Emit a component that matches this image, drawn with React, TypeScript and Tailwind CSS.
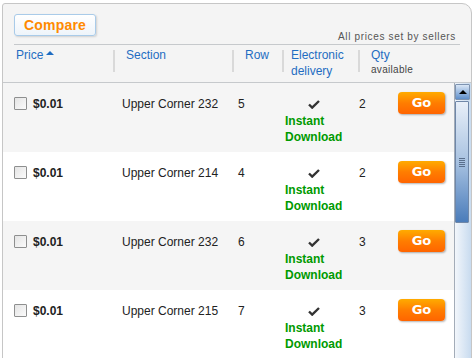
import React from "react";

type Listing = {
  section: string;
  row: string;
  qty: string;
};

const listings: Listing[] = [
  { section: "Upper Corner 232", row: "5", qty: "2" },
  { section: "Upper Corner 214", row: "4", qty: "2" },
  { section: "Upper Corner 232", row: "6", qty: "3" },
  { section: "Upper Corner 215", row: "7", qty: "3" },
];

const Sep: React.FC = () => <div className="mt-[5px] h-[22px] w-[2px] shrink-0 bg-[#d9d9d9]" />;

const CheckMark: React.FC = () => (
  <svg width="12" height="9" viewBox="0 0 12 9" className="block">
    <path d="M1 4.5 L4.2 7.6 L11 1" fill="none" stroke="#333" strokeWidth="2.4" />
  </svg>
);

const GoButton: React.FC = () => (
  <button className="mt-[9px] flex h-[22px] w-[47px] items-center justify-center rounded-[4px] bg-gradient-to-b from-[#ffab00] via-[#ff7d00] to-[#ff6400] font-['DejaVu_Sans',sans-serif] text-[13px] font-bold text-white shadow-[1px_1px_2px_rgba(0,0,0,0.3)]">
    Go
  </button>
);

const ListingRow: React.FC<{ item: Listing; shaded: boolean }> = ({ item, shaded }) => (
  <div className={`flex h-[69px] items-start pl-[11px] text-[12px] leading-4 text-[#222] ${shaded ? "bg-[#f5f5f5]" : "bg-white"}`}>
    <div className="flex w-[108px] items-start">
      <div className="mt-[14px] h-[13px] w-[13px] rounded-[1px] border border-[#8e8f8f] bg-gradient-to-br from-[#e4e4e4] to-[#fbfbfb]" />
      <span className="ml-[6px] mt-[13px] font-bold">$0.01</span>
    </div>
    <div className="w-[116px] pt-[13px]">{item.section}</div>
    <div className="w-[47px] pt-[13px]">{item.row}</div>
    <div className="flex w-[74px] flex-col items-start pt-[17px]">
      <div className="flex flex-col items-center">
        <CheckMark />
        <div className="mt-[4px] font-bold text-[#009a00]">
          Instant
          <br />
          Download
        </div>
      </div>
    </div>
    <div className="w-[39px] pt-[13px]">{item.qty}</div>
    <GoButton />
  </div>
);

const Scrollbar: React.FC = () => (
  <div className="flex w-[17px] flex-col border-l border-[#a3acb8] bg-gradient-to-r from-[#f2f6fb] to-[#c8dbef] pt-[1px]">
    <div className="flex h-[16px] w-[15px] items-center justify-center rounded-[1px] border border-[#7d93b0] bg-gradient-to-b from-[#d9e6f5] to-[#5f8fca]">
      <div className="h-0 w-0 border-x-[4px] border-b-[4px] border-x-transparent border-b-black" />
    </div>
    <div className="mt-[1px] flex h-[122px] w-[14px] flex-col items-center justify-center gap-[1px] rounded-[1px] border border-[#6f87a8] bg-gradient-to-b from-[#e8eff8] via-[#a8c2e1] to-[#4a7cba]">
      <div className="h-[1px] w-[6px] bg-[#5a6f8c]" />
      <div className="h-[1px] w-[6px] bg-[#5a6f8c]" />
      <div className="h-[1px] w-[6px] bg-[#5a6f8c]" />
      <div className="h-[1px] w-[6px] bg-[#5a6f8c]" />
      <div className="h-[1px] w-[6px] bg-[#5a6f8c]" />
    </div>
  </div>
);

const App: React.FC = () => {
  return (
    <div className="h-[358px] w-[474px] overflow-hidden bg-white pl-[2px] pt-[3px] font-['Liberation_Sans',Arial,sans-serif]">
      <div className="flex h-[400px] w-[470px] flex-col rounded-tl-[3px] rounded-tr-[10px] border border-[#c6c6c6] bg-[#f4f4f4]">
        <div className="mx-[11px] flex h-[41px] items-start justify-between border-b border-[#c6c9cc] pt-[10px]">
          <button className="flex h-[22px] w-[82px] items-center justify-center rounded-[3px] border border-[#a9cbe9] bg-gradient-to-b from-white to-[#eef4fa] text-[14px] font-bold tracking-[0.2px] text-[#ff8a00] shadow-[1px_1px_2px_rgba(0,0,0,0.15)]">
            Compare
          </button>
          <span className="mb-[1px] mr-[4px] self-end text-[10px] leading-[13px] tracking-[0.65px] text-[#555]">
            All prices set by sellers
          </span>
        </div>

        <div className="flex h-[38px] items-start border-b border-[#c6c9cc] pl-[13px] text-[12px] leading-4 text-[#1f6dc2]">
          <div className="flex w-[97px] items-start pt-[2px]">
            Price
            <div className="ml-[3px] mt-[4px] h-0 w-0 border-x-[4px] border-b-[4px] border-x-transparent border-b-[#1f6dc2]" />
          </div>
          <Sep />
          <div className="ml-[11px] w-[106px] pt-[2px]">Section</div>
          <Sep />
          <div className="ml-[11px] w-[37px] pt-[2px]">Row</div>
          <Sep />
          <div className="ml-[7px] w-[67px] pt-[2px]">
            Electronic
            <br />
            delivery
          </div>
          <Sep />
          <div className="ml-[11px] flex flex-col pt-[2px]">
            <span>Qty</span>
            <span className="text-[10px] leading-[13px] tracking-[0.3px] text-[#444]">available</span>
          </div>
        </div>

        <div className="flex min-h-0 flex-1">
          <div className="w-[451px]">
            {listings.map((item, i) => (
              <ListingRow key={i} item={item} shaded={i % 2 === 0} />
            ))}
          </div>
          <Scrollbar />
        </div>
      </div>
    </div>
  );
};

export default App;
